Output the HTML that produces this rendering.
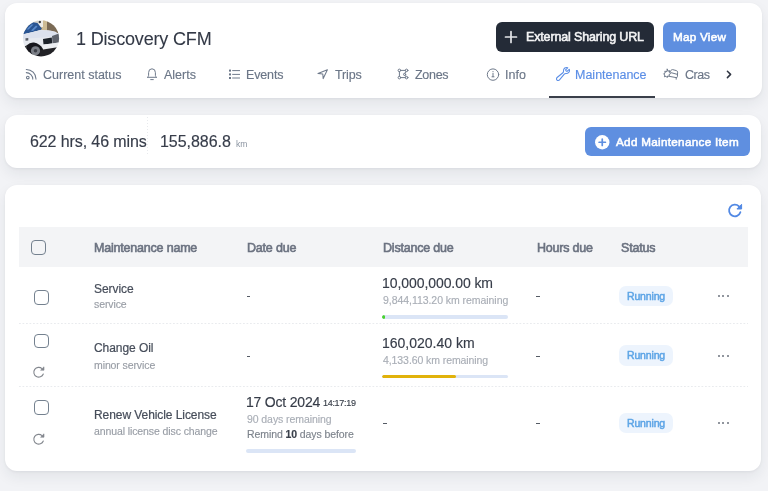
<!DOCTYPE html>
<html><head><meta charset="utf-8">
<style>
*{box-sizing:border-box;margin:0;padding:0}
html,body{width:768px;height:491px;overflow:hidden;background:#f2f3f6;font-family:"Liberation Sans",sans-serif;-webkit-font-smoothing:antialiased}
.card{position:absolute;background:#fff;border-radius:12px;box-shadow:0 1px 3px rgba(16,24,40,.05),0 6px 14px rgba(30,40,60,.07)}
.t{position:absolute;white-space:nowrap;line-height:1;will-change:transform}
svg{position:absolute;overflow:visible}
.tab{color:#6b7687;font-size:12.5px;-webkit-text-stroke-width:.15px}
.th{color:#6b7280;font-size:12.5px;letter-spacing:-.2px;-webkit-text-stroke-width:.6px}
.sb{-webkit-text-stroke-width:.55px}
.nm{color:#464d5a;font-size:12px;letter-spacing:-.07px;-webkit-text-stroke-width:.2px}
.sub{color:#989da5;font-size:10.5px;letter-spacing:-.1px;-webkit-text-stroke-width:.15px}
.sub2{color:#a9aeb6;font-size:10.5px;-webkit-text-stroke-width:.15px}
.big{color:#363c48;font-size:14px;-webkit-text-stroke-width:.15px}
.dash{position:absolute;width:3.5px;height:1.2px;background:#555b65}
.cb{position:absolute;width:14.5px;height:14.5px;border:1.6px solid #74818f;border-radius:4px}
.badge{position:absolute;width:53.5px;height:20.3px;border-radius:7px;background:#edf4fd}
.badge span{position:absolute;left:7.8px;top:5px;font-size:10.5px;color:#5ea5e6;line-height:1;letter-spacing:-.15px;will-change:transform;-webkit-text-stroke-width:.5px}
.dots{position:absolute;width:12px;height:2px}
.dots i{position:absolute;top:0;width:2px;height:2px;border-radius:1px;background:#6c737e}
.bar{position:absolute;height:3.5px;border-radius:2px;background:#dbe5f6;overflow:hidden}
.rule{position:absolute;left:19px;width:729px;height:1px;background:linear-gradient(to right,#e9ebee 60%,transparent 60%);background-size:3.5px 1px}
</style></head><body>

<!-- CARD 1 -->
<div class="card" style="left:5px;top:3px;width:757px;height:95px"></div>

<!-- avatar -->
<svg style="left:21px;top:18px" width="40" height="40" viewBox="0 0 40 40">
  <defs><clipPath id="av"><circle cx="20" cy="20.4" r="18.1"/></clipPath>
  <filter id="bl" x="-20%" y="-20%" width="140%" height="140%"><feGaussianBlur stdDeviation="0.7"/></filter></defs>
  <g clip-path="url(#av)"><g filter="url(#bl)">
    <rect x="-2" y="-2" width="44" height="44" fill="#d8d5cc"/>
    <rect x="19" y="-2" width="8" height="16" fill="#cdbb94"/>
    <rect x="26" y="-2" width="16" height="20" fill="#7a6a54"/>
    <path d="M16 0 L22 0 L22 9 L18.5 9Z" fill="#eeede9"/>
    <circle cx="18.8" cy="4" r="1.2" fill="#3a3d44"/>
    <path d="M-2 18 L2.5 14.5 L7.5 7.5 L12 4.3 L16.5 5 L21 10.8 L19.5 12 L10 14.4 L3 16.5Z" fill="#2a5593"/>
    <path d="M5.5 11.5 L10.5 6.5 L12.5 6.5 L7.5 11.5Z M10 12.5 L15 7.5 L16.5 8.5 L12 13Z" fill="#5a8bcc"/>
    <path d="M-2 18 L3 16 L10 14.4 L19.5 12 L27 12.3 L34 13.6 L38 16 L40 24 L40 40 L-2 40Z" fill="#e6e9ef"/>
    <path d="M2 16.5 L10 14.4 L20 12.2 L30 12.8 L37 15.5 L36 18 L22 19.5 L6 20.5 L2 20.5Z" fill="#dce1ed"/>
    <path d="M4.5 20.3 L7.3 20.1 L7.3 22.5 L4.5 22.7Z" fill="#5a5f69"/>
    <path d="M22 21 L30.8 19.6 L31.2 25.6 L22.5 26.4Z" fill="#1d2129"/>
    <path d="M31 18 L38 15.5 L40 24 L31.5 25.5Z" fill="#5e636c"/>
    <path d="M21 26.8 L37 24.8 L40 28 L36 32 L22 32.5Z" fill="#eceef2"/>
    <path d="M5.5 27.5 Q9 24 13 24.5 Q19 25.5 22 31 L22 40 L4 40Z" fill="#17191c"/>
    <circle cx="14.5" cy="32.8" r="4.6" fill="#7a7e86"/>
    <circle cx="14.5" cy="32.8" r="1.8" fill="#3e4147"/>
    <path d="M19 32 L38 29 L40 40 L19 40Z" fill="#232427"/>
    <path d="M1 29 L6 27.5 L5 34 L1 34Z" fill="#2e3034"/>
  </g></g>
</svg>
<div class="t" style="left:76px;top:29.7px;font-size:18px;color:#333946;letter-spacing:-.17px;-webkit-text-stroke-width:.1px">1 Discovery CFM</div>

<!-- buttons -->
<div style="position:absolute;left:496px;top:22px;width:158px;height:30px;border-radius:6px;background:#242b37"></div>
<svg style="left:505px;top:31px" width="12" height="12" viewBox="0 0 12 12"><path d="M6 0.5V11.5M0.5 6H11.5" stroke="#e4e6e9" stroke-width="1.7" stroke-linecap="round"/></svg>
<div class="t sb" style="left:525.8px;top:31px;font-size:12.5px;color:#f4f4f5;letter-spacing:-.15px">External Sharing URL</div>

<div style="position:absolute;left:663px;top:22px;width:73px;height:30px;border-radius:6px;background:#5f8fe0"></div>
<div class="t sb" style="left:672.8px;top:31.2px;font-size:11.7px;color:#fff;letter-spacing:.25px">Map View</div>

<!-- tabs -->
<svg style="left:22px;top:64px" width="20" height="20" viewBox="0 0 20 20" fill="none" stroke="#6f7a8b" stroke-width="1.05" stroke-linecap="round"><path d="M4.3 5.4A9.7 9.7 0 0 1 14 15.1"/><path d="M4.3 8.6A6.5 6.5 0 0 1 10.8 15.1"/><circle cx="5.8" cy="13.5" r="1.35"/></svg>
<div class="t tab" style="left:43px;top:68.6px">Current status</div>

<svg style="left:142px;top:64px" width="20" height="20" viewBox="0 0 20 20" fill="none" stroke="#6f7a8b" stroke-width="1.0" stroke-linecap="round" stroke-linejoin="round"><path d="M5.6 13.3H14.4M5.6 13.3Q6.6 12.6 6.6 11.4V8.6A3.4 3.8 0 0 1 13.4 8.6V11.4Q13.4 12.6 14.4 13.3"/><path d="M8.7 15.6H11.3"/></svg>
<div class="t tab" style="left:164px;top:68.6px">Alerts</div>

<svg style="left:224px;top:64px" width="20" height="20" viewBox="0 0 20 20" fill="none" stroke="#6f7a8b" stroke-width="1.0" stroke-linecap="round"><path d="M8.6 6.6H15.6M8.6 10.4H15.6M8.6 14H15.6"/><rect x="5" y="5.6" width="2" height="2" fill="#6b7687" stroke="none"/><rect x="5" y="9.4" width="2" height="2" fill="#6b7687" stroke="none"/><rect x="5" y="13" width="2" height="2" fill="#6b7687" stroke="none"/></svg>
<div class="t tab" style="left:245.9px;top:68.6px;letter-spacing:-.15px">Events</div>

<svg style="left:312px;top:64px" width="20" height="20" viewBox="0 0 20 20" fill="none" stroke="#6f7a8b" stroke-width="1.05" stroke-linecap="round" stroke-linejoin="round"><path d="M6 9.6L15.4 5.8L11.2 14.6L10.8 10Z"/></svg>
<div class="t tab" style="left:334.5px;top:68.6px;letter-spacing:-.15px">Trips</div>

<svg style="left:393px;top:64px" width="20" height="20" viewBox="0 0 20 20" fill="none" stroke="#6f7a8b" stroke-width="1.0" stroke-linecap="round" stroke-linejoin="round"><circle cx="6.4" cy="6.4" r="1.3"/><circle cx="13.6" cy="6.4" r="1.3"/><circle cx="6.4" cy="13.6" r="1.3"/><circle cx="13.6" cy="13.6" r="1.3"/><circle cx="11.6" cy="10.4" r="1.1"/><path d="M7.7 6.4H12.3M6.4 7.7V12.3M7.7 13.6H12.3M13 7.6L11.9 9.3M11.9 11.5L13 12.4"/></svg>
<div class="t tab" style="left:415px;top:68.6px;letter-spacing:-.3px">Zones</div>

<svg style="left:483px;top:64px" width="20" height="20" viewBox="0 0 20 20" fill="none" stroke="#6f7a8b" stroke-width="1.0" stroke-linecap="round" stroke-linejoin="round"><circle cx="10" cy="10.6" r="5.7"/><path d="M10 7.4V7.5M10 9.2V12.6M9 12.8H11"/></svg>
<div class="t tab" style="left:504.9px;top:68.6px">Info</div>

<svg style="left:555px;top:66px" width="16" height="16" viewBox="0 0 24 24" fill="none" stroke="#5b8ee6" stroke-width="1.6" stroke-linecap="round" stroke-linejoin="round"><path d="M21.75 6.75a4.5 4.5 0 01-4.884 4.484c-1.076-.091-2.264.071-2.95.904l-7.152 8.684a2.548 2.548 0 11-3.586-3.586l8.684-7.152c.833-.686.995-1.874.904-2.95a4.5 4.5 0 016.336-4.486l-3.276 3.276a3.004 3.004 0 002.25 2.25l3.276-3.276c.256.565.398 1.192.398 1.852z"/></svg>
<div class="t tab" style="left:574.8px;top:68.6px;color:#5b8ee6">Maintenance</div>
<div style="position:absolute;left:549px;top:96px;width:106px;height:2px;background:#3a3f4a"></div>

<svg style="left:660px;top:64px" width="24" height="20" viewBox="0 0 24 20" fill="none" stroke="#6f7a8b" stroke-width="1.0" stroke-linecap="round" stroke-linejoin="round"><path d="M7.3 5.2L8 7.2L9.6 6.6L9.3 8.4L10.6 9.6L9 10.6L9.4 12.4L7.6 12L7.2 13.6L6 12.2L4.4 12.8L4.8 11L3.6 9.8L5.2 9L4.8 7.2L6.6 7.6Z"/><path d="M10.3 7.6L11.2 6.2Q11.6 5.4 12.6 5.6L16.4 6.6Q17.6 7 17.6 8.2L17.4 12.6Q17.3 13.8 16.2 13.6L9.6 12.4"/><path d="M10.8 8.6L16.8 10.2M16.2 13.6L16.2 15.2"/></svg>
<div style="position:absolute;left:684px;top:60px;width:26px;height:28px;overflow:hidden"><div class="t tab" style="left:0.7px;top:8.6px;letter-spacing:-.45px">Crashes</div></div>
<svg style="left:720px;top:64px" width="20" height="20" viewBox="0 0 20 20" fill="none" stroke="#2f3542" stroke-width="1.5" stroke-linecap="round" stroke-linejoin="round"><path d="M7.4 7.2L10.6 10.4L7.4 13.6"/></svg>

<!-- CARD 2 -->
<div class="card" style="left:5px;top:115px;width:756px;height:53px"></div>
<div class="t" style="left:29.5px;top:134.3px;font-size:16px;color:#373d4a;letter-spacing:-.1px;-webkit-text-stroke-width:.15px">622 hrs, 46 mins</div>
<div style="position:absolute;left:147px;top:117px;width:1px;height:37px;background:linear-gradient(to bottom,#e8eaed 50%,transparent 50%);background-size:1px 3px"></div>
<div class="t" style="left:159.8px;top:134.3px;font-size:16px;color:#373d4a;letter-spacing:-.05px;-webkit-text-stroke-width:.15px">155,886.8</div>
<div class="t" style="left:235.8px;top:140px;font-size:8.5px;color:#8a93a0">km</div>

<div style="position:absolute;left:584.5px;top:127.3px;width:165px;height:29px;border-radius:6px;background:#5f8fe0"></div>
<svg style="left:595.4px;top:134.7px" width="14.5" height="14.5" viewBox="0 0 14.5 14.5"><circle cx="7.25" cy="7.25" r="7.2" fill="#fff"/><path d="M7.25 4.1V10.4M4.1 7.25H10.4" stroke="#5f8fe0" stroke-width="1.7" stroke-linecap="round"/></svg>
<div class="t sb" style="left:616px;top:135.8px;font-size:11.7px;color:#fff;letter-spacing:.3px">Add Maintenance Item</div>

<!-- CARD 3 -->
<div class="card" style="left:5px;top:184.6px;width:756px;height:286.6px"></div>
<svg style="left:727.6px;top:202.6px" width="15" height="14" viewBox="0 0 15 14" fill="none"><path d="M12.4 9.2A5.8 5.8 0 1 1 11 3.4" stroke="#5289e4" stroke-width="1.8" stroke-linecap="round"/><path d="M13.6 1.3V6H8.9Z" fill="#5289e4" stroke="#5289e4" stroke-width="1" stroke-linejoin="round"/></svg>

<div style="position:absolute;left:19px;top:227px;width:729px;height:40px;background:#f3f4f6"></div>
<div class="cb" style="left:31px;top:240px"></div>
<div class="t th" style="left:94px;top:241.5px">Maintenance name</div>
<div class="t th" style="left:246.5px;top:241.5px">Date due</div>
<div class="t th" style="left:383px;top:241.5px">Distance due</div>
<div class="t th" style="left:536.5px;top:241.5px">Hours due</div>
<div class="t th" style="left:620.5px;top:241.5px">Status</div>

<!-- row 1 -->
<div class="cb" style="left:34px;top:290px"></div>
<div class="t nm" style="left:93.5px;top:282.5px">Service</div>
<div class="t sub" style="left:93.5px;top:299px">service</div>
<div class="dash" style="left:246.5px;top:296px"></div>
<div class="t big" style="left:382px;top:276px;letter-spacing:-.07px">10,000,000.00 km</div>
<div class="t sub2" style="left:382.5px;top:295px;letter-spacing:-.05px">9,844,113.20 km remaining</div>
<div class="bar" style="left:382px;top:315.1px;width:126px"><div style="position:absolute;left:0;top:0;width:2.5px;height:3.5px;background:#47d22e;border-radius:2px"></div></div>
<div class="dash" style="left:536px;top:295.8px"></div>
<div class="badge" style="left:619px;top:286px"><span>Running</span></div>
<div class="dots" style="left:717.5px;top:295px"><i style="left:0"></i><i style="left:4.75px"></i><i style="left:9.5px"></i></div>
<div class="rule" style="top:323px"></div>

<!-- row 2 -->
<div class="cb" style="left:34px;top:333.5px"></div>
<svg style="left:32.5px;top:365.5px" width="12" height="12" viewBox="0 0 12 12" fill="none"><path d="M10.3 8A4.9 4.9 0 1 1 9 2.6" stroke="#83878e" stroke-width="1.1" stroke-linecap="round"/><path d="M11 0.8V4.2H7.6Z" fill="#83878e" stroke="#83878e" stroke-width=".6" stroke-linejoin="round"/></svg>
<div class="t nm" style="left:93.5px;top:342.2px">Change Oil</div>
<div class="t sub" style="left:93.5px;top:359.6px">minor service</div>
<div class="dash" style="left:246.5px;top:355.9px"></div>
<div class="t big" style="left:382px;top:336px">160,020.40 km</div>
<div class="t sub2" style="left:382.5px;top:354.6px;letter-spacing:-.08px">4,133.60 km remaining</div>
<div class="bar" style="left:382px;top:374.8px;width:126px"><div style="position:absolute;left:0;top:0;width:74px;height:3.5px;background:#e1b20a;border-radius:2px"></div></div>
<div class="dash" style="left:536px;top:355.6px"></div>
<div class="badge" style="left:619px;top:345.4px"><span>Running</span></div>
<div class="dots" style="left:717.5px;top:354.5px"><i style="left:0"></i><i style="left:4.75px"></i><i style="left:9.5px"></i></div>
<div class="rule" style="top:386px"></div>

<!-- row 3 -->
<div class="cb" style="left:34px;top:400px"></div>
<svg style="left:32.5px;top:432.5px" width="12" height="12" viewBox="0 0 12 12" fill="none"><path d="M10.3 8A4.9 4.9 0 1 1 9 2.6" stroke="#83878e" stroke-width="1.1" stroke-linecap="round"/><path d="M11 0.8V4.2H7.6Z" fill="#83878e" stroke="#83878e" stroke-width=".6" stroke-linejoin="round"/></svg>
<div class="t nm" style="left:93.5px;top:408.7px">Renew Vehicle License</div>
<div class="t sub" style="left:93.5px;top:426px">annual license disc change</div>
<div class="t big" style="left:246px;top:395px;letter-spacing:-.2px">17 Oct 2024</div>
<div class="t" style="left:322.6px;top:399.2px;font-size:9px;color:#3a404b;letter-spacing:-.3px;-webkit-text-stroke-width:.15px">14:17:19</div>
<div class="t sub2" style="left:246.5px;top:414.3px;letter-spacing:-.08px">90 days remaining</div>
<div class="t" style="left:246.5px;top:429px;font-size:10.5px;color:#7d838c;letter-spacing:-.09px;-webkit-text-stroke-width:.15px">Remind <b style="color:#3a404b">10</b> days before</div>
<div class="bar" style="left:246.2px;top:449px;width:109.5px"></div>
<div class="dash" style="left:383px;top:422.5px"></div>
<div class="dash" style="left:536px;top:422.5px"></div>
<div class="badge" style="left:619px;top:413px"><span>Running</span></div>
<div class="dots" style="left:717.5px;top:421.5px"><i style="left:0"></i><i style="left:4.75px"></i><i style="left:9.5px"></i></div>

</body></html>
